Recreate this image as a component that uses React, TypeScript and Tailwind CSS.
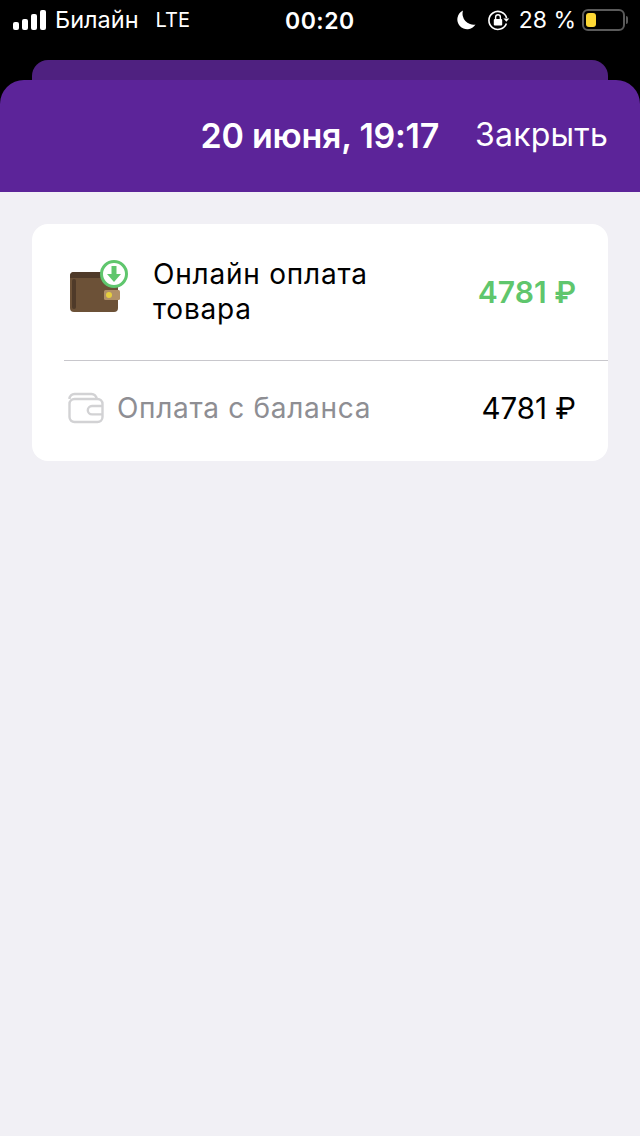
import React from "react";

const font = { fontFamily: "Inter, 'Noto Sans', sans-serif" };

function SignalBars() {
  return (
    <div className="flex items-end gap-[3px]">
      <div className="h-[8px] w-[6px] rounded-[2px] bg-white" />
      <div className="h-[11px] w-[6px] rounded-[2px] bg-white" />
      <div className="h-[16px] w-[6px] rounded-[2px] bg-white" />
      <div className="h-[20px] w-[6px] rounded-[2px] bg-white" />
    </div>
  );
}

function Moon() {
  return (
    <svg width="20" height="20" viewBox="0 0 20 20">
      <path d="M7 .5A9.8 9.8 0 1 0 19.5 14.5 11 11 0 0 1 7 .5Z" fill="#fff" />
    </svg>
  );
}

function RotationLock() {
  return (
    <svg width="22" height="22" viewBox="0 0 22 22" fill="none">
      <path d="M19.6 9A9 9 0 1 0 19.4 14.5" stroke="#fff" strokeWidth="1.6" />
      <path d="M16.4 9.4h6l-3 3.4Z" fill="#fff" />
      <rect x="6.8" y="10" width="8.4" height="6.6" rx="1" fill="#fff" />
      <path d="M8.6 10V8.2a2.4 2.4 0 0 1 4.8 0V10" stroke="#fff" strokeWidth="1.4" />
    </svg>
  );
}

function Battery() {
  return (
    <div className="flex items-center gap-[1px]">
      <div className="flex h-[22px] w-[43px] items-center rounded-[6px] border-2 border-[#5a5a5a] px-[2px]">
        <div className="h-[14px] w-[10px] rounded-[3px] bg-[#fdd835]" />
      </div>
      <div className="h-[8px] w-[2px] rounded-r-full bg-[#5a5a5a]" />
    </div>
  );
}

function StatusBar() {
  return (
    <div className="relative flex h-10 items-center justify-between pl-[13px] pr-[12px] text-white">
      <div className="flex items-center">
        <SignalBars />
        <span className="ml-[9px] text-[23.5px] leading-none">Билайн</span>
        <span className="ml-[17px] text-[20px] leading-none">LTE</span>
      </div>
      <span className="absolute left-[285px] top-[7px] text-[23px] font-semibold leading-[28px] tracking-[0.5px]">00:20</span>
      <div className="flex items-center">
        <Moon />
        <div className="ml-[11px]"><RotationLock /></div>
        <span className="ml-[10px] text-[23px] leading-none">28 %</span>
        <div className="ml-[6px]"><Battery /></div>
      </div>
    </div>
  );
}

function WalletIcon() {
  return (
    <svg width="60" height="56" viewBox="0 0 60 56" className="shrink-0">
      <path d="M0 16a4 4 0 0 1 4-4h38a6 6 0 0 1 6 6v30a4 4 0 0 1-4 4H4a4 4 0 0 1-4-4Z" fill="#6c5137" />
      <path d="M0 16a4 4 0 0 1 4-4h38a6 6 0 0 1 6 6H0Z" fill="#4f3a29" />
      <rect x="2" y="19" width="4" height="30" rx="2" fill="#4f3a29" />
      <rect x="34" y="30" width="16" height="10" rx="1.5" fill="#b09068" />
      <circle cx="39" cy="35" r="3" fill="#e6cf3e" />
      <circle cx="44" cy="14" r="12.5" fill="#fff" stroke="#5fc66d" strokeWidth="3" />
      <path d="M41.5 6h5v8h4.5l-7 8-7-8h4.5Z" fill="#5fc66d" />
    </svg>
  );
}

function SmallWallet() {
  return (
    <svg width="36" height="32" viewBox="0 0 36 32" fill="none" stroke="#d2d2d4" strokeWidth="2.4" className="shrink-0">
      <path d="M1.5 7a5 5 0 0 1 5-5h17a5 5 0 0 1 5 5" />
      <rect x="1.5" y="7" width="33" height="23" rx="5" />
      <path d="M34.5 14H24a4.2 4.2 0 0 0 0 8.4h10.5" />
    </svg>
  );
}

export default function App() {
  return (
    <div className="flex min-h-[1136px] flex-col bg-black" style={font}>
      <StatusBar />
      <div className="mx-8 mt-5 h-5 rounded-t-[16px] bg-[#4f2180]" />
      <header className="flex h-[112px] items-center justify-end gap-[36px] rounded-t-[24px] bg-[#5c2499] pb-[2px] pr-8 text-white">
        <span className="text-[34px] font-semibold tracking-[-0.25px]">20 июня, 19:17</span>
        <span className="text-[32px] tracking-[0.2px]">Закрыть</span>
      </header>
      <main className="flex-1 bg-[#f1f0f5] px-8 pt-8">
        <section className="rounded-[16px] bg-white pl-8">
          <div className="flex h-[136px] items-center pr-8">
            <div className="mb-[8px] ml-[6px]"><WalletIcon /></div>
            <p className="ml-[23px] w-[240px] text-[28px] leading-[35px] tracking-[0.78px] text-black">Онлайн оплата товара</p>
            <span className="ml-auto text-[30px] font-semibold text-[#5fc66d]">4781 ₽</span>
          </div>
          <div className="h-px bg-[#c8c7cc]" />
          <div className="flex h-[100px] items-center pb-[6px] pr-8">
            <div className="ml-[4px]"><SmallWallet /></div>
            <span className="ml-[13px] text-[28px] tracking-[0.7px] text-[#8e8e93]">Оплата с баланса</span>
            <span className="ml-auto text-[29.5px] text-black">4781 ₽</span>
          </div>
        </section>
      </main>
    </div>
  );
}
